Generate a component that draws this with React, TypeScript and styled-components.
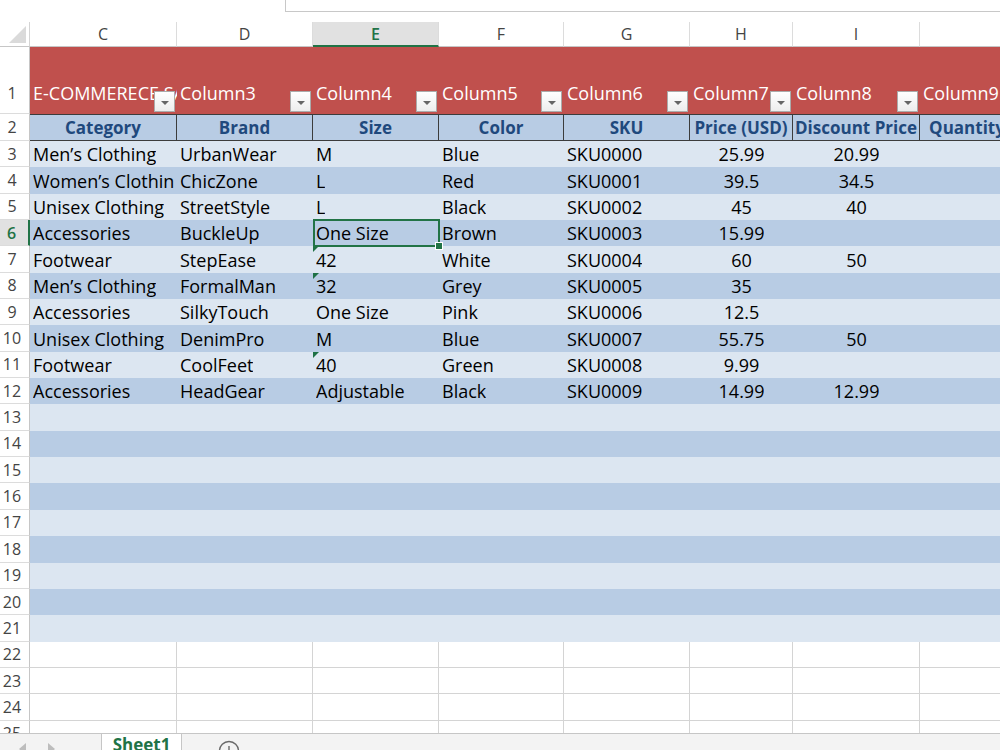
import React from "react";
import styled, { createGlobalStyle, css } from "styled-components";

type Tone = "light" | "dark" | "plain";
type Align = "left" | "center";

const GlobalStyle = createGlobalStyle`
  html, body {
    margin: 0;
    padding: 0;
    background: #fff;
  }
  body {
    font-family: "Open Sans", "Liberation Sans", sans-serif;
  }
`;

const COLS = "30px 147px 136px 126px 125px 126px 103px 127px 170px";
const ROW_H = 26.35;

const tones: Record<Tone, string> = {
  light: "#dce6f1",
  dark: "#b8cce4",
  plain: "#ffffff",
};

const letters = ["C", "D", "E", "F", "G", "H", "I", "J"];
const topRow = [
  "E-COMMERECE SALES",
  "Column3",
  "Column4",
  "Column5",
  "Column6",
  "Column7",
  "Column8",
  "Column9",
];
const headers = [
  "Category",
  "Brand",
  "Size",
  "Color",
  "SKU",
  "Price (USD)",
  "Discount Price",
  "Quantity Ordered",
];
const data = [
  ["Men’s Clothing", "UrbanWear", "M", "Blue", "SKU0000", "25.99", "20.99"],
  ["Women’s Clothing", "ChicZone", "L", "Red", "SKU0001", "39.5", "34.5"],
  ["Unisex Clothing", "StreetStyle", "L", "Black", "SKU0002", "45", "40"],
  ["Accessories", "BuckleUp", "One Size", "Brown", "SKU0003", "15.99", ""],
  ["Footwear", "StepEase", "42", "White", "SKU0004", "60", "50"],
  ["Men’s Clothing", "FormalMan", "32", "Grey", "SKU0005", "35", ""],
  ["Accessories", "SilkyTouch", "One Size", "Pink", "SKU0006", "12.5", ""],
  ["Unisex Clothing", "DenimPro", "M", "Blue", "SKU0007", "55.75", "50"],
  ["Footwear", "CoolFeet", "40", "Green", "SKU0008", "9.99", ""],
  ["Accessories", "HeadGear", "Adjustable", "Black", "SKU0009", "14.99", "12.99"],
];
const flagged = [7, 8, 11];
const ACTIVE_ROW = 6;
const ACTIVE_COL = 2;

const Page = styled.div`
  width: 1000px;
  height: 750px;
  overflow: hidden;
  display: flex;
  flex-direction: column;
  background: #fff;
`;

const TopStrip = styled.div`
  flex: none;
  height: 22px;
  padding-left: 285px;
  box-sizing: border-box;
`;

const FormulaBox = styled.div`
  height: 12px;
  box-sizing: border-box;
  border-left: 1px solid #c8c8c8;
  border-bottom: 1px solid #c8c8c8;
`;

const Sheet = styled.div`
  flex: 1;
  min-height: 0;
  overflow: hidden;
  display: grid;
  grid-template-columns: ${COLS};
  grid-template-rows: 25px 67px 27px repeat(23, ${ROW_H}px);
  align-content: start;
`;

const Corner = styled.div`
  position: relative;
  box-sizing: border-box;
  border-right: 1px solid #d4d4d4;
  border-bottom: 1px solid #c6c6c6;

  &::after {
    content: "";
    position: absolute;
    right: 3px;
    bottom: 3px;
    border-left: 17px solid transparent;
    border-bottom: 17px solid #dadada;
  }
`;

const ColHead = styled.div<{ $active?: boolean }>`
  box-sizing: border-box;
  display: flex;
  align-items: center;
  justify-content: center;
  font-size: 16px;
  color: #444;
  border-right: 1px solid #dcdcdc;
  border-bottom: 1px solid #c6c6c6;
  overflow: hidden;
  ${(p) =>
    p.$active &&
    css`
      background: #e1e1e1;
      color: #217346;
      font-weight: 600;
      border-bottom: 2px solid #217346;
    `}
`;

const RowNum = styled.div<{ $active?: boolean; $bottom?: boolean }>`
  box-sizing: border-box;
  display: flex;
  align-items: ${(p) => (p.$bottom ? "flex-end" : "center")};
  justify-content: center;
  padding-right: 5px;
  padding-bottom: ${(p) => (p.$bottom ? "9px" : "0")};
  font-size: 16px;
  line-height: 22px;
  color: #444;
  border-right: 1px solid #c6c6c6;
  border-bottom: 1px solid #dcdcdc;
  ${(p) =>
    p.$active &&
    css`
      background: #e1e1e1;
      color: #217346;
      font-weight: 600;
      border-right: 2px solid #217346;
    `}
`;

const TitleCell = styled.div`
  position: relative;
  box-sizing: border-box;
  display: flex;
  align-items: flex-end;
  padding: 0 3px 10px;
  background: #c0504d;
  color: #fff;
  font-size: 18px;
  line-height: 22px;
  white-space: nowrap;
  overflow: hidden;
`;

const FilterButton = styled.span`
  position: absolute;
  right: 2px;
  bottom: 2px;
  width: 21px;
  height: 21px;
  box-sizing: border-box;
  border: 1px solid #ababab;
  background: linear-gradient(#ffffff, #ededed);

  &::after {
    content: "";
    position: absolute;
    left: 6px;
    top: 9px;
    border-left: 4px solid transparent;
    border-right: 4px solid transparent;
    border-top: 4px solid #666;
  }
`;

const HeadCell = styled.div`
  box-sizing: border-box;
  display: flex;
  align-items: center;
  justify-content: center;
  background: #b8cce4;
  color: #1f497d;
  font-size: 17px;
  font-weight: 700;
  white-space: nowrap;
  overflow: hidden;
  border-top: 1px solid #3c3c3c;
  border-bottom: 1px solid #3c3c3c;
  border-right: 1px solid #3c3c3c;
`;

const Cell = styled.div<{
  $tone: Tone;
  $align?: Align;
  $flag?: boolean;
  $selected?: boolean;
}>`
  position: relative;
  box-sizing: border-box;
  min-width: 0;
  display: flex;
  align-items: center;
  justify-content: ${(p) => (p.$align === "center" ? "center" : "flex-start")};
  padding: 0 3px;
  background: ${(p) => tones[p.$tone]};
  font-size: 18px;
  color: #000;
  white-space: nowrap;
  ${(p) =>
    p.$tone === "plain" &&
    css`
      border-right: 1px solid #d4d4d4;
      border-bottom: 1px solid #d4d4d4;
    `}
  ${(p) =>
    p.$flag &&
    css`
      &::before {
        content: "";
        position: absolute;
        left: 0;
        top: 0;
        border-top: 6px solid #1e7145;
        border-right: 6px solid transparent;
      }
    `}
  ${(p) =>
    p.$selected &&
    css`
      z-index: 1;
      &::after {
        content: "";
        position: absolute;
        inset: -1px -1px -1px 0;
        border: 2px solid #217346;
      }
    `}
`;

const CellText = styled.span`
  display: block;
  max-width: 100%;
  overflow: hidden;
`;

const FillHandle = styled.span`
  position: absolute;
  right: -4px;
  bottom: -4px;
  width: 6px;
  height: 6px;
  background: #217346;
  border: 1px solid #fff;
  z-index: 2;
`;

const TabBar = styled.div`
  flex: none;
  height: 17px;
  display: flex;
  background: #f3f3f3;
  border-top: 1px solid #c6c6c6;
  box-sizing: border-box;
  overflow: hidden;
`;

const NavArrows = styled.div`
  width: 101px;
  display: flex;
  gap: 22px;
  padding: 9px 0 0 19px;
  box-sizing: border-box;
`;

const Arrow = styled.span<{ $dir: "left" | "right" }>`
  width: 0;
  height: 0;
  border-top: 6px solid transparent;
  border-bottom: 6px solid transparent;
  ${(p) =>
    p.$dir === "left"
      ? css`border-right: 7px solid #bdbdbd;`
      : css`border-left: 7px solid #bdbdbd;`}
`;

const SheetTab = styled.div`
  width: 81px;
  margin-top: -1px;
  box-sizing: border-box;
  background: #fff;
  border-left: 1px solid #c6c6c6;
  border-right: 1px solid #c6c6c6;
  text-align: center;
  padding-top: 1px;
  font-size: 17px;
  font-weight: 700;
  color: #217346;
  line-height: 22px;
`;

const AddSheet = styled.div`
  padding: 6px 0 0 36px;
  color: #6a6a6a;
`;

const AddIcon = () => (
  <svg width="22" height="22" viewBox="0 0 22 22">
    <circle cx="11" cy="11" r="9.5" fill="none" stroke="currentColor" strokeWidth="1.4" />
    <path d="M11 6v10M6 11h10" stroke="currentColor" strokeWidth="1.4" />
  </svg>
);

const App = () => {
  const rows: React.ReactNode[] = [];

  for (let r = 3; r <= 25; r++) {
    const values = data[r - 3] ?? [];
    const tone: Tone = r <= 21 ? (r % 2 === 1 ? "light" : "dark") : "plain";
    rows.push(
      <RowNum key={`n${r}`} $active={r === ACTIVE_ROW}>
        {r}
      </RowNum>
    );
    letters.forEach((_, c) => {
      const selected = r === ACTIVE_ROW && c === ACTIVE_COL;
      rows.push(
        <Cell
          key={`c${r}-${c}`}
          $tone={tone}
          $align={c === 5 || c === 6 ? "center" : "left"}
          $flag={c === ACTIVE_COL && flagged.includes(r)}
          $selected={selected}
        >
          <CellText>{values[c] ?? ""}</CellText>
          {selected && <FillHandle />}
        </Cell>
      );
    });
  }

  return (
    <>
      <GlobalStyle />
      <Page>
        <TopStrip>
          <FormulaBox />
        </TopStrip>
        <Sheet>
          <Corner />
          {letters.map((l, i) => (
            <ColHead key={l} $active={i === ACTIVE_COL}>
              {l}
            </ColHead>
          ))}

          <RowNum $bottom>1</RowNum>
          {topRow.map((t) => (
            <TitleCell key={t}>
              {t}
              <FilterButton />
            </TitleCell>
          ))}

          <RowNum>2</RowNum>
          {headers.map((h) => (
            <HeadCell key={h}>{h}</HeadCell>
          ))}

          {rows}
        </Sheet>
        <TabBar>
          <NavArrows>
            <Arrow $dir="left" />
            <Arrow $dir="right" />
          </NavArrows>
          <SheetTab>Sheet1</SheetTab>
          <AddSheet>
            <AddIcon />
          </AddSheet>
        </TabBar>
      </Page>
    </>
  );
};

export default App;
